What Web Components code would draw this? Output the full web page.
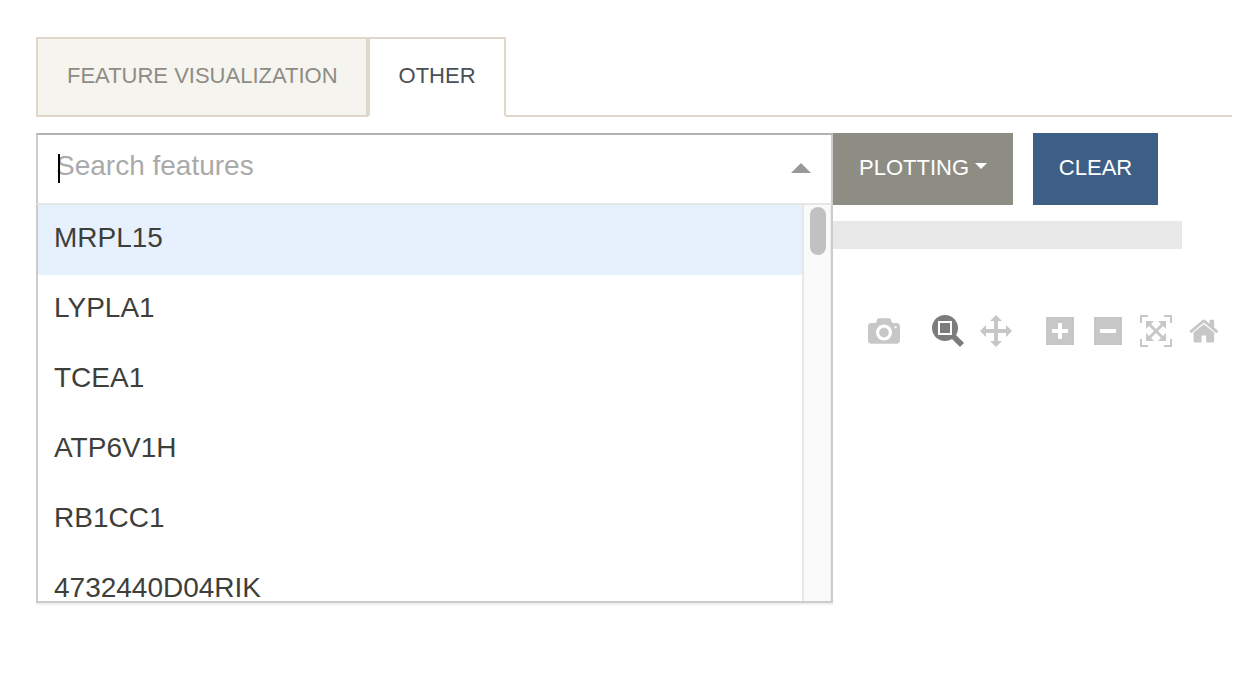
<!DOCTYPE html>
<html lang="en">
<head>
<meta charset="utf-8">
<title>Feature visualization</title>
<style>
body { margin: 0; background: #fff; font-family: "Liberation Sans", Arial, sans-serif; color: #3e3f3a; }
</style>
</head>
<body>
<feature-page></feature-page>
<script>
function define(name, html, setup) {
  const template = document.createElement('template');
  template.innerHTML = html;
  customElements.define(name, class extends HTMLElement {
    constructor() {
      super();
      this.attachShadow({ mode: 'open' }).append(template.content.cloneNode(true));
    }
    connectedCallback() { if (setup) setup(this, this.shadowRoot); }
  });
}

define('nav-tab', `
<style>
:host { display: block; }
a { display: block; box-sizing: border-box; height: 80px; padding: 25px 28px 27px 29px; border: 2px solid #dfd7ca;
  font-size: 22px; line-height: 24px; text-decoration: none; white-space: nowrap; color: #8e8c84; background: #f5f4ef; }
:host([active]) a { color: #495057; background: #fff; border-bottom-color: #fff; }
</style>
<a href="#"><slot></slot></a>`);

define('tab-bar', `
<style>
:host { display: block; border-bottom: 2px solid #dfd7ca; }
nav { display: flex; margin-bottom: -2px; }
</style>
<nav><slot></slot></nav>`);

define('action-button', `
<style>
:host { display: block; flex: none; }
button { display: flex; align-items: center; justify-content: center; gap: 6px; box-sizing: border-box; width: 100%; height: 72px;
  margin: 0; padding: 0 26px 2px; border: 0; border-radius: 0; background: var(--fill, #8d8d84); color: #fff;
  font: 22px/24px "Liberation Sans", Arial, sans-serif; white-space: nowrap; }
svg { display: none; width: 12px; height: 6px; margin-bottom: 4px; fill: currentColor; }
:host([menu]) svg { display: block; }
</style>
<button type="button"><slot></slot><svg viewBox="0 0 12 6"><path d="M0 0h12L6 6z"/></svg></button>`);

define('feature-option', `
<style>
:host { display: block; padding: 17px 16px 21px; font-size: 28px; line-height: 32px; white-space: nowrap; }
:host([focused]) { background: #e7f1fe; }
</style>
<slot></slot>`, host => host.setAttribute('role', 'option'));

define('feature-select', `
<style>
:host { display: block; position: relative; }
.control { display: flex; align-items: center; box-sizing: border-box; height: 72px; padding: 0 20px 2px 18px; position: relative;
  border: 2px solid #ccc; border-top-color: #b3b3b3; border-bottom-color: #e6e6e6; background: #fff; }
input { flex: 1; min-width: 0; margin: 0; padding: 0 0 4px; border: 0; outline: 0; background: none; color: inherit;
  font: 28px/32px "Liberation Sans", Arial, sans-serif; }
input::placeholder { color: #aaa; opacity: 1; }
.cursor { position: absolute; left: 20px; top: 19px; width: 2px; height: 29px; background: #000; }
.arrow { position: relative; width: 20px; height: 10px; fill: #999; }
.menu { position: absolute; z-index: 1; top: 100%; left: 0; right: 0; display: flex; height: 396px;
  border: 2px solid #ccc; border-top: 0; background: #fff; box-shadow: 0 2px 0 #f0f0f0; }
.list { flex: 1; overflow: hidden; }
.track { box-sizing: border-box; width: 29px; padding: 2px 4px 0 6px; border-left: 2px solid #e8e8e8; border-right: 1px solid #ededed; background: #fafafa; }
.thumb { width: 16px; height: 48px; border-radius: 8px; background: #c1c1c1; }
</style>
<div class="control">
  <span class="cursor"></span>
  <input type="text" role="combobox" aria-label="Search features" aria-expanded="true" aria-controls="list" placeholder="Search features">
  <svg class="arrow" viewBox="0 0 20 10"><path d="M0 10L10 0l10 10z"/></svg>
</div>
<div class="menu">
  <div class="list" id="list" role="listbox"><slot></slot></div>
  <div class="track"><div class="thumb"></div></div>
</div>`);

const ICONS = {
  camera: [1000, 'Download plot', 'm500 450c-83 0-150-67-150-150 0-83 67-150 150-150 83 0 150 67 150 150 0 83-67 150-150 150z m400 150h-120c-16 0-34 13-39 29l-31 93c-6 15-23 28-40 28h-340c-16 0-34-13-39-28l-31-94c-6-15-23-28-40-28h-120c-55 0-100-45-100-100v-450c0-55 45-100 100-100h800c55 0 100 45 100 100v450c0 55-45 100-100 100z m-400-550c-138 0-250 112-250 250 0 138 112 250 250 250 138 0 250-112 250-250 0-138-112-250-250-250z m365 380c-19 0-35 16-35 35 0 19 16 35 35 35 19 0 35-16 35-35 0-19-16-35-35-35z'],
  zoom: [1000, 'Zoom', 'm1000-25l-250 251c40 63 63 138 63 218 0 224-182 406-407 406-224 0-406-182-406-406s183-406 407-406c80 0 155 22 218 62l250-250 125 125z m-812 250l0 438 437 0 0-438-437 0z m62 375l313 0 0-312-313 0 0 312z'],
  pan: [1000, 'Pan', 'm1000 350l-187 188 0-125-250 0 0 250 125 0-188 187-187-187 125 0 0-250-250 0 0 125-188-188 186-187 0 125 252 0 0-250-125 0 187-188 188 188-125 0 0 250 250 0 0-126 187 188z'],
  plus: [875, 'Zoom in', 'm1 787l0-875 875 0 0 875-875 0z m687-500l-187 0 0-187-125 0 0 187-188 0 0 125 188 0 0 187 125 0 0-187 187 0 0-125z'],
  minus: [875, 'Zoom out', 'm0 788l0-876 876 0 0 876-876 0z m688-500l-500 0 0 125 500 0 0-125z'],
  autoscale: [1000, 'Autoscale', 'm250 850l-187 0-63 0 0-62 0-188 63 0 0 188 187 0 0 62z m688 0l-188 0 0-62 188 0 0-188 62 0 0 188 0 62-62 0z m-875-938l0 188-63 0 0-188 0-62 63 0 187 0 0 62-187 0z m875 188l0-188-188 0 0-62 188 0 62 0 0 62 0 188-62 0z m-125 188l-1 0-93-94-156 156 156 156 92-93 2 0 0 250-250 0 0-2 93-92-156-156-156 156 94 92 0 2-250 0 0-250 0 0 93 93 157-156-157-156-93 94 0 0 0-250 250 0 0 0-94 93 156 157 156-157-93-93 0 0 250 0 0 250z'],
  home: [928, 'Reset axes', 'm786 296v-267q0-15-11-26t-25-10h-214v214h-143v-214h-214q-15 0-25 10t-11 26v267q0 1 0 2t0 2l321 264 321-264q1-1 1-4z m124 39l-34-41q-5-5-12-6h-2q-7 0-12 3l-386 322-386-322q-7-4-13-4-7 2-12 7l-35 41q-4 5-3 12t6 11l401 334q18 15 42 15t43-15l136-114v109q0 8 5 13t13 5h107q8 0 13-5t5-13v-227l122-102q5-5 6-12t-4-13z']
};

define('tool-button', `
<style>
:host { display: block; }
button { display: flex; align-items: center; justify-content: center; width: 48px; height: 32px; margin: 0; padding: 0; border: 0; background: none; color: #c7c7c7; }
:host([active]) button { color: #7c7c7c; }
svg { display: block; height: 32px; fill: currentColor; }
</style>
<button type="button"><svg><path transform="matrix(1 0 0 -1 0 850)"/></svg></button>`, (host, root) => {
  const [width, label, d] = ICONS[host.getAttribute('icon')];
  root.querySelector('svg').setAttribute('viewBox', '0 0 ' + width + ' 1000');
  root.querySelector('path').setAttribute('d', d);
  root.querySelector('button').setAttribute('aria-label', label);
});

define('plot-toolbar', `
<style>
:host { display: flex; justify-content: flex-end; gap: 16px; padding-right: 4px; }
div { display: flex; }
</style>
<div><tool-button icon="camera"></tool-button></div>
<div><tool-button icon="zoom" active></tool-button><tool-button icon="pan"></tool-button></div>
<div><tool-button icon="plus"></tool-button><tool-button icon="minus"></tool-button><tool-button icon="autoscale"></tool-button><tool-button icon="home"></tool-button></div>`);

define('feature-page', `
<style>
:host { display: block; box-sizing: border-box; min-height: 100vh; padding: 37px 18px 0 36px; }
.row { display: flex; margin-top: 16px; padding-right: 74px; }
feature-select { flex: 1; min-width: 0; }
.plotting { width: 180px; }
.clear { width: 125px; margin-left: 20px; --fill: #3e5f85; }
.strip { height: 28px; margin: 16px 50px 66px 0; background: #e8e8e8; }
</style>
<tab-bar><nav-tab>FEATURE VISUALIZATION</nav-tab><nav-tab active>OTHER</nav-tab></tab-bar>
<div class="row">
  <feature-select>
    <feature-option focused>MRPL15</feature-option>
    <feature-option>LYPLA1</feature-option>
    <feature-option>TCEA1</feature-option>
    <feature-option>ATP6V1H</feature-option>
    <feature-option>RB1CC1</feature-option>
    <feature-option>4732440D04RIK</feature-option>
  </feature-select>
  <action-button class="plotting" menu>PLOTTING</action-button>
  <action-button class="clear">CLEAR</action-button>
</div>
<div class="strip"></div>
<plot-toolbar></plot-toolbar>`);
</script>
</body>
</html>
